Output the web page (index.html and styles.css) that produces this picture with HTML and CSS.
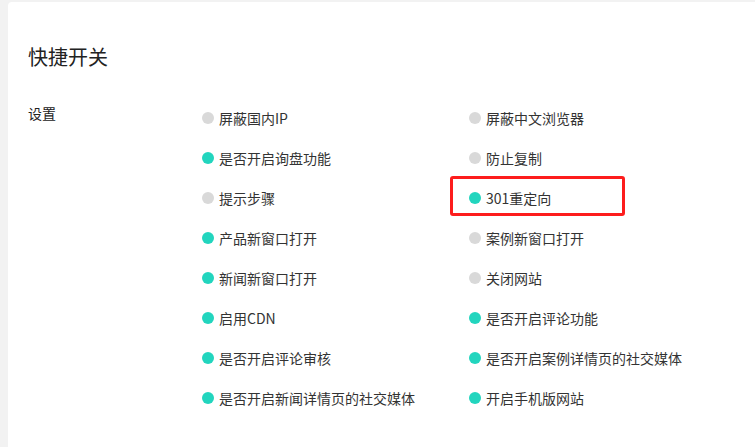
FILE: index.html
```html
<!DOCTYPE html>
<html lang="zh-CN">
<head>
  <meta charset="UTF-8" />
  <meta name="viewport" content="width=device-width, initial-scale=1.0"/>
  <title>快捷开关</title>
  <link rel="stylesheet" href="styles.css">
</head>
<body>
  <div class="panel">
    <h2 class="panel-title">快捷开关</h2>
    <div class="setting-row">
      <div class="setting-label">设置</div>
      <div class="switch-grid">
        <div class="switch"><span class="dot"></span>屏蔽国内IP</div>
        <div class="switch"><span class="dot"></span>屏蔽中文浏览器</div>
        <div class="switch"><span class="dot on"></span>是否开启询盘功能</div>
        <div class="switch"><span class="dot"></span>防止复制</div>
        <div class="switch"><span class="dot"></span>提示步骤</div>
        <div class="switch marked"><span class="dot on"></span>301重定向</div>
        <div class="switch"><span class="dot on"></span>产品新窗口打开</div>
        <div class="switch"><span class="dot"></span>案例新窗口打开</div>
        <div class="switch"><span class="dot on"></span>新闻新窗口打开</div>
        <div class="switch"><span class="dot"></span>关闭网站</div>
        <div class="switch"><span class="dot on"></span>启用CDN</div>
        <div class="switch"><span class="dot on"></span>是否开启评论功能</div>
        <div class="switch"><span class="dot on"></span>是否开启评论审核</div>
        <div class="switch"><span class="dot on"></span>是否开启案例详情页的社交媒体</div>
        <div class="switch"><span class="dot on"></span>是否开启新闻详情页的社交媒体</div>
        <div class="switch"><span class="dot on"></span>开启手机版网站</div>
      </div>
    </div>
  </div>
</body>
</html>
```

FILE: styles.css
```css
body {
  margin: 0;
  background: #f2f2f2;
  font-family: "Microsoft YaHei", "Noto Sans CJK SC", "Noto Sans", sans-serif;
  color: #333;
}
.panel {
  margin: 2px 0 0 8px;
  height: calc(100vh - 2px);
  background: #fff;
  border-radius: 4px 0 0 0;
  padding: 20px 20px 0;
  box-sizing: border-box;
}
.panel-title {
  margin: 21px 0 0;
  font-size: 20px;
  line-height: 28px;
  font-weight: normal;
  color: #222;
}
.setting-row {
  display: flex;
  margin-top: 27px;
}
.setting-label {
  width: 175px;
  flex-shrink: 0;
  margin-top: 5px;
  font-size: 14px;
  line-height: 20px;
  color: #222;
}
.switch-grid {
  display: grid;
  grid-template-columns: 267px 267px;
  grid-auto-rows: 40px;
  flex-shrink: 0;
}
.switch {
  position: relative;
  display: flex;
  align-items: center;
  font-size: 14px;
  color: #333;
}
.dot {
  width: 12px; height: 12px;
  border-radius: 50%;
  background: #d9d9d9;
  margin: 0 5px 0 -1px;
}
.dot.on { background: #22d5be; }
.switch.marked::after {
  content: "";
  position: absolute;
  left: -20px; top: -2px;
  width: 175px; height: 40px;
  border: 3px solid #fd1d1d;
  border-radius: 3px;
  box-sizing: border-box;
}
```
